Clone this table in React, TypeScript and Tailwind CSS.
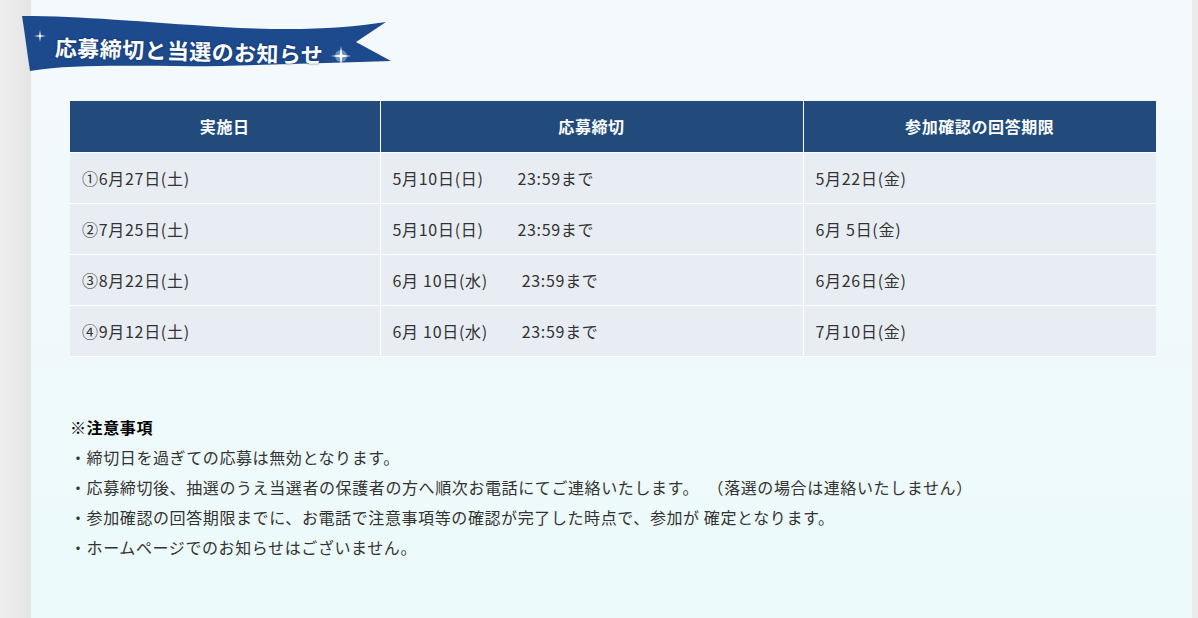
import React from "react";

const ROWS = [
  ["①6月27日(土)", "5月10日(日)\u3000\u00a0\u00a0\u00a0 23:59まで", "5月22日(金)"],
  ["②7月25日(土)", "5月10日(日)\u3000\u00a0\u00a0\u00a0 23:59まで", "6月 5日(金)"],
  ["③8月22日(土)", "6月 10日(水)\u3000\u00a0\u00a0\u00a0 23:59まで", "6月26日(金)"],
  ["④9月12日(土)", "6月 10日(水)\u3000\u00a0\u00a0\u00a0 23:59まで", "7月10日(金)"],
];

const NOTES = [
  "・締切日を過ぎての応募は無効となります。",
  "・応募締切後、抽選のうえ当選者の保護者の方へ順次お電話にてご連絡いたします。\u00a0 （落選の場合は連絡いたしません）",
  "・参加確認の回答期限までに、お電話で注意事項等の確認が完了した時点で、参加が 確定となります。",
  "・ホームページでのお知らせはございません。",
];

function Sparkle({ x, y, r, glow }: { x: number; y: number; r: number; glow?: boolean }) {
  return (
    <g transform={`translate(${x} ${y})`}>
      {glow && <circle r={r * 0.6} fill="#cfe3ff" opacity="0.45" />}
      <path
        d={`M0 ${-r} L${r * 0.13} ${-r * 0.13} L${r} 0 L${r * 0.13} ${r * 0.13} L0 ${r} L${-r * 0.13} ${r * 0.13} L${-r} 0 L${-r * 0.13} ${-r * 0.13} Z`}
        fill="#ffffff"
      />
    </g>
  );
}

function Ribbon() {
  return (
    <div className="relative ml-[-9px] h-[75px] w-[380px]">
      <svg className="absolute left-0 top-0" width="380" height="75" viewBox="0 0 380 75">
        <path
          d="M0 16 C60 16 120 22 200 27 C270 31 320 29 364 22 L334 42 L369 61 C320 63 260 64 200 66 C120 67 60 63 8 71 C5 52 3 34 0 16 Z"
          fill="#1c4a8c"
        />
        <Sparkle x={18} y={36} r={6} />
        <Sparkle x={319} y={56} r={10} glow />
      </svg>
      <h2 className="absolute left-[33px] top-[35px] origin-left rotate-[1.6deg] text-[22px] font-bold leading-none tracking-[0.4px] text-white [text-shadow:0_0_2px_rgba(10,30,80,0.8)]">
        応募締切と当選のお知らせ
      </h2>
    </div>
  );
}

export default function App() {
  return (
    <div className="flex min-h-screen w-full bg-[#eeeeee] [font-family:'Noto_Sans_CJK_JP','Noto_Sans',sans-serif] text-[#333333]">
      <div className="w-[31px] shrink-0 bg-gradient-to-r from-[#efefef] to-[#e4e4e4]" />
      <main className="flex-1 bg-gradient-to-b from-[#f4f9fd] to-[#ecfafb]">
        <Ribbon />
        <table className="mt-[26px] ml-[39px] w-[1086px] table-fixed border-collapse">
          <colgroup>
            <col className="w-[310px]" />
            <col className="w-[423px]" />
            <col className="w-[353px]" />
          </colgroup>
          <thead>
            <tr className="h-[51px] bg-[#224b7c] text-white">
              {["実施日", "応募締切", "参加確認の回答期限"].map((h) => (
                <th
                  key={h}
                  className="border-x border-white text-center text-[16px] font-bold tracking-[0.6px] first:border-l-0 last:border-r-0"
                >
                  {h}
                </th>
              ))}
            </tr>
          </thead>
          <tbody>
            {ROWS.map((row, i) => (
              <tr key={i} className="h-[51px] bg-[#e8ecf3]">
                {row.map((c, j) => (
                  <td
                    key={j}
                    className="border border-white px-[12px] text-[16px] tracking-[0.7px] whitespace-pre first:border-l-0 last:border-r-0"
                  >
                    {c}
                  </td>
                ))}
              </tr>
            ))}
          </tbody>
        </table>
        <div className="mt-[55px] ml-[39px] text-[16px] tracking-[0.6px]">
          <p className="font-bold leading-[30px] text-black">※注意事項</p>
          {NOTES.map((n) => (
            <p key={n} className="leading-[30px]">
              {n}
            </p>
          ))}
        </div>
      </main>
      <div className="w-[6px] shrink-0 bg-[#ebebeb]" />
    </div>
  );
}
